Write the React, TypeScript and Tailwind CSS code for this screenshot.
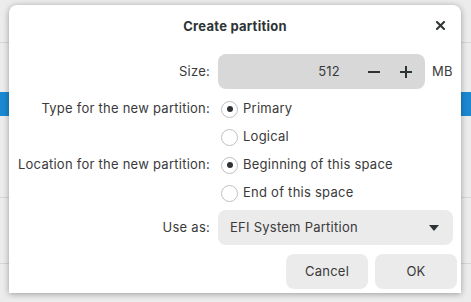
import React from "react";

const Radio = ({ checked, label }: { checked?: boolean; label: string }) => (
  <div className="flex h-[28px] items-center">
    <span className="ml-[3px] flex h-[17px] w-[17px] items-center justify-center rounded-full border border-[#bfbfbf] bg-white">
      {checked && <span className="h-[6px] w-[6px] rounded-full bg-[#2e3436]" />}
    </span>
    <span className="ml-[5px]">{label}</span>
  </div>
);

const App = () => {
  return (
    <div
      className="relative h-[302px] w-[471px] overflow-hidden bg-[#ececec] text-[13px] tracking-[0.25px] text-[#2e3436]"
      style={{ fontFamily: "Inter, 'Noto Sans', sans-serif" }}
    >
      {/* app behind the dialog */}
      <div className="flex flex-col">
        <div className="h-[43px] border-b border-[#d6d6d6]" />
        <div className="h-[49px]" />
        <div className="h-[24px] bg-[#1b88d2]" />
        <div className="h-[82px] border-b border-[#d6d6d6]" />
        <div className="h-[66px] border-b border-[#d6d6d6]" />
      </div>

      {/* dialog */}
      <div className="absolute left-[9px] top-[5px] flex h-[288px] w-[452px] flex-col rounded-t-[8px] bg-white shadow-[0_1px_6px_rgba(0,0,0,0.35)]">
        <div className="relative flex h-[40px] items-center justify-center pt-[3px]">
          <span className="font-bold">Create partition</span>
          <svg
            className="absolute right-[16px] top-[16px]"
            width="9"
            height="9"
            viewBox="0 0 9 9"
          >
            <path d="M1 1L8 8M8 1L1 8" stroke="#2e3436" strokeWidth="2" strokeLinecap="square" />
          </svg>
        </div>

        <div className="mt-[9px] grid grid-cols-[201px_1fr] gap-x-[8px] pr-[9px] text-[#3a3a3a]">
          <div className="flex h-[35px] items-center justify-end">Size:</div>
          <div className="flex h-[35px] items-center">
            <div className="flex h-[35px] w-[207px] items-center rounded-[8px] bg-[#d8d8d8]">
              <span className="flex-1 pr-[28px] text-right">512</span>
              <svg width="12" height="12" viewBox="0 0 12 12" className="mr-[20px]">
                <path d="M0 6H12" stroke="#2e3436" strokeWidth="2" />
              </svg>
              <svg width="12" height="12" viewBox="0 0 12 12" className="mr-[13px]">
                <path d="M0 6H12M6 0V12" stroke="#2e3436" strokeWidth="2" />
              </svg>
            </div>
            <span className="ml-[7px]">MB</span>
          </div>

          <div className="mt-[6px] flex h-[28px] items-center justify-end">Type for the new partition:</div>
          <div className="mt-[6px]">
            <Radio checked label="Primary" />
          </div>
          <div />
          <Radio label="Logical" />

          <div className="flex h-[28px] items-center justify-end">Location for the new partition:</div>
          <Radio checked label="Beginning of this space" />
          <div />
          <Radio label="End of this space" />

          <div className="mt-[3px] flex h-[35px] items-center justify-end">Use as:</div>
          <div className="mt-[3px] flex h-[35px] items-center rounded-[8px] bg-[#ebebeb] pl-[12px] pr-[14px]">
            <span className="flex-1">EFI System Partition</span>
            <svg width="10" height="6" viewBox="0 0 10 6">
              <path d="M0 0H10L5 6Z" fill="#2e3436" />
            </svg>
          </div>
        </div>

        <div className="mt-[9px] flex justify-end gap-[7px] pr-[4px] text-[#3a3a3a]">
          <button className="flex h-[35px] w-[82px] items-center justify-center rounded-[8px] bg-[#ebebeb]">
            Cancel
          </button>
          <button className="flex h-[35px] w-[82px] items-center justify-center rounded-[8px] bg-[#ebebeb]">
            OK
          </button>
        </div>
      </div>
    </div>
  );
};

export default App;
